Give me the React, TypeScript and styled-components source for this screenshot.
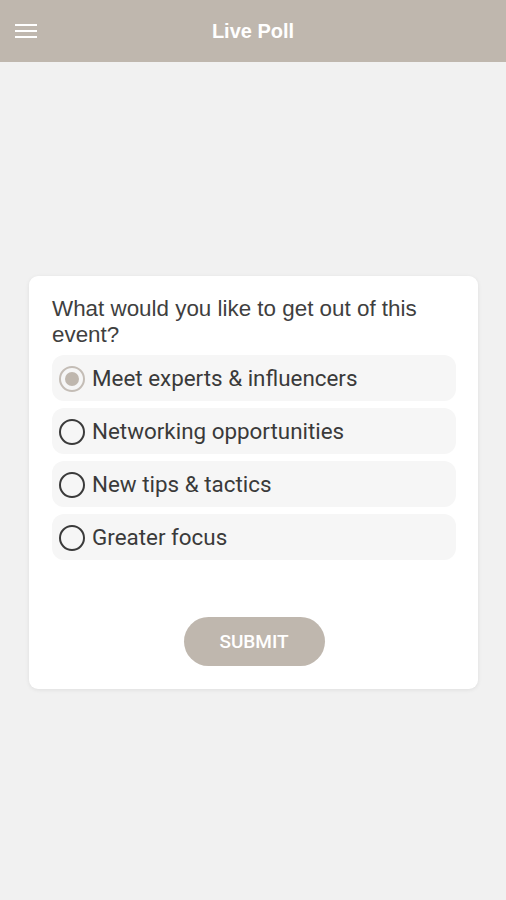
import {useState} from 'react';
import styled, {createGlobalStyle} from 'styled-components';

const GlobalStyle = createGlobalStyle`
  body {
    margin: 0;
    background: #f1f1f1;
    font-family: 'Liberation Sans', Arial, sans-serif;
  }
`;

const options = [
  'Meet experts & influencers',
  'Networking opportunities',
  'New tips & tactics',
  'Greater focus',
];

const App = () => {
  const [selected, setSelected] = useState(0);

  return (
    <Page>
      <GlobalStyle />
      <Header>
        <MenuButton aria-label="menu">
          <svg width="22" height="16" viewBox="0 0 22 16">
            <rect x="0" y="1" width="22" height="2" fill="#fff" />
            <rect x="0" y="7" width="22" height="2" fill="#fff" />
            <rect x="0" y="13" width="22" height="2" fill="#fff" />
          </svg>
        </MenuButton>
        <Title>Live Poll</Title>
      </Header>
      <Body>
        <Card>
          <Question>What would you like to get out of this event?</Question>
          <OptionList>
            {options.map((label, i) => (
              <Option key={label} onClick={() => setSelected(i)}>
                <Radio $checked={selected === i} />
                <OptionLabel>{label}</OptionLabel>
              </Option>
            ))}
          </OptionList>
          <Footer>
            <SubmitButton>SUBMIT</SubmitButton>
          </Footer>
        </Card>
      </Body>
    </Page>
  );
};

const Page = styled.div`
  min-height: 900px;
  display: flex;
  flex-direction: column;
`;

const Header = styled.header`
  height: 62px;
  background: #bfb7ae;
  display: flex;
  align-items: center;
  justify-content: center;
  position: relative;
`;

const MenuButton = styled.button`
  position: absolute;
  left: 15px;
  top: 23px;
  padding: 0;
  border: none;
  background: none;
  display: flex;
`;

const Title = styled.h1`
  margin: 0;
  color: #fff;
  font-size: 20px;
  font-weight: bold;
  font-family: 'Liberation Sans', Arial, sans-serif;
`;

const Body = styled.main`
  padding: 214px 28px 0 29px;
`;

const Card = styled.section`
  background: #fff;
  border-radius: 9px;
  box-shadow: 0 1px 4px rgba(0, 0, 0, 0.08);
  padding: 20px 22px 23px 23px;
`;

const Question = styled.p`
  margin: 0 0 7px;
  font-size: 22.4px;
  line-height: 26px;
  color: #3f3f3f;
  font-family: 'Liberation Sans', Arial, sans-serif;
`;

const OptionList = styled.div`
  display: flex;
  flex-direction: column;
  gap: 7px;
`;

const Option = styled.label`
  height: 46px;
  background: #f6f6f6;
  border-radius: 12px;
  display: flex;
  align-items: center;
  padding-left: 7px;
  gap: 7px;
  cursor: pointer;
`;

const Radio = styled.span<{$checked: boolean}>`
  width: 26px;
  height: 26px;
  box-sizing: border-box;
  border-radius: 50%;
  border: 2px solid ${(p) => (p.$checked ? '#c4bdb6' : '#3a3a3a')};
  display: flex;
  align-items: center;
  justify-content: center;
  flex-shrink: 0;
  margin-top: 2px;

  &::after {
    content: '';
    width: 14px;
    height: 14px;
    border-radius: 50%;
    background: #bfb7ae;
    display: ${(p) => (p.$checked ? 'block' : 'none')};
  }
`;

const OptionLabel = styled.span`
  font-family: Roboto, 'Liberation Sans', sans-serif;
  font-size: 22.4px;
  color: #3a3a3a;
`;

const Footer = styled.div`
  display: flex;
  justify-content: center;
  padding-top: 57px;
`;

const SubmitButton = styled.button`
  width: 141px;
  height: 49px;
  border: none;
  border-radius: 25px;
  background: #bfb7ae;
  color: #fff;
  font-family: Roboto, 'Liberation Sans', sans-serif;
  font-weight: 500;
  font-size: 19px;
  cursor: pointer;
`;

export default App;
